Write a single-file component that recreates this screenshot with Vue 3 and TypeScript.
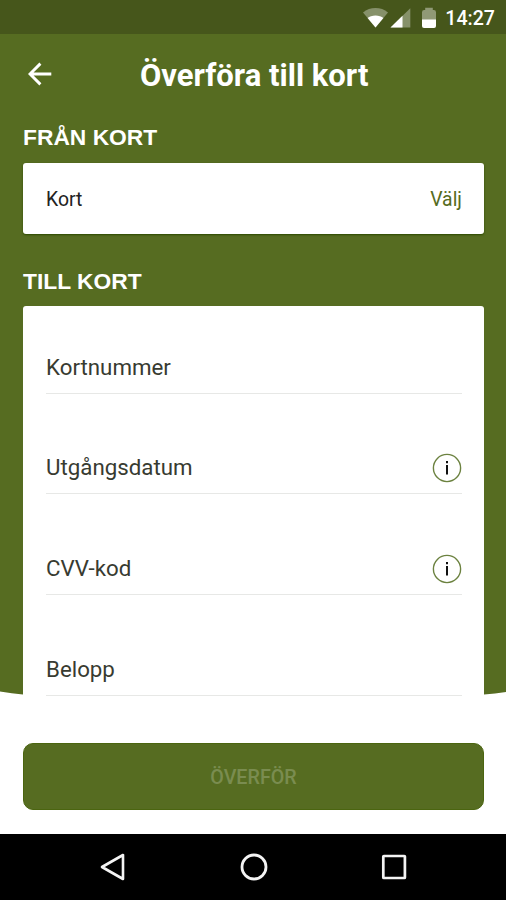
<script setup lang="ts">
interface Field {
  id: string
  label: string
  info: boolean
}

const fields: Field[] = [
  { id: 'number', label: 'Kortnummer', info: false },
  { id: 'expiry', label: 'Utgångsdatum', info: true },
  { id: 'cvv', label: 'CVV-kod', info: true },
  { id: 'amount', label: 'Belopp', info: false },
]
</script>

<template>
  <div class="screen">
    <div class="status">
      <svg class="status-icons" width="80" height="24" viewBox="0 0 80 24">
        <path d="M0 5.4C7 -.4 18 -.4 25 5.4L12.5 20.5Z" fill="#fff" fill-opacity=".35" />
        <path d="M4.6 11C8 7.6 17 7.6 20.4 11L12.5 20.5Z" fill="#fff" />
        <path d="M27.5 20.5L47.3 1.2V20.5Z" fill="#fff" fill-opacity=".35" />
        <path d="M27.5 20.5L39.5 8.8V20.5Z" fill="#fff" />
        <path d="M59 13V5.2Q59 3 61.2 3H62.2V.8H69.8V3H70.8Q73 3 73 5.2V13Z" fill="#fff" fill-opacity=".4" />
        <path d="M59 12.5H73V19Q73 21 71 21H61Q59 21 59 19Z" fill="#fff" />
      </svg>
      <span class="clock">14:27</span>
    </div>

    <main class="body">
      <header class="header">
        <svg class="back" width="24" height="24" viewBox="0 0 24 24">
          <path d="M23.3 12H2M12.4 1.6L2 12L12.4 22.4" fill="none" stroke="#fff" stroke-width="2.9" />
        </svg>
        <h1 class="title">Överföra till kort</h1>
      </header>

      <h2 class="section">FRÅN KORT</h2>
      <div class="card picker">
        <span class="picker-label">Kort</span>
        <span class="picker-action">Välj</span>
      </div>

      <h2 class="section second">TILL KORT</h2>
      <div class="card form">
        <div v-for="field in fields" :key="field.id" class="field">
          <span class="label">{{ field.label }}</span>
          <svg v-if="field.info" class="info" width="30" height="30" viewBox="0 0 30 30">
            <circle cx="15" cy="15" r="13.6" fill="none" stroke="#6c8240" stroke-width="1.4" />
            <path d="M15 12V21.5" stroke="#111" stroke-width="2" />
            <path d="M15 8V10.2" stroke="#111" stroke-width="2" />
          </svg>
        </div>
      </div>
    </main>

    <footer class="footer">
      <button class="submit" type="button" disabled>ÖVERFÖR</button>
    </footer>

    <nav class="nav">
      <svg width="28" height="30" viewBox="0 0 28 30">
        <path d="M3 15L24 3V27Z" fill="none" stroke="#f4f4f4" stroke-width="2.6" stroke-linejoin="round" />
      </svg>
      <svg width="30" height="30" viewBox="0 0 30 30">
        <circle cx="15" cy="15" r="12" fill="none" stroke="#f4f4f4" stroke-width="2.8" />
      </svg>
      <svg width="28" height="30" viewBox="0 0 28 30">
        <rect x="3.3" y="4" width="21.6" height="22" rx=".6" fill="none" stroke="#f4f4f4" stroke-width="2.7" />
      </svg>
    </nav>
  </div>
</template>

<style>
body {
  margin: 0;
  background: #fff;
}
</style>

<style scoped>
.screen {
  width: 506px;
  height: 900px;
  display: flex;
  flex-direction: column;
  overflow: hidden;
  background: #fff;
  font-family: Roboto, sans-serif;
}

.status {
  box-sizing: border-box;
  flex: none;
  height: 34px;
  padding: 0 11px 0 363px;
  display: flex;
  justify-content: space-between;
  background: #46561b;
  color: #fff;
}

.status-icons {
  margin-top: 6.5px;
}

.clock {
  font-size: 19.6px;
  font-weight: 500;
  line-height: 37px;
}

.body {
  box-sizing: border-box;
  flex: none;
  height: 676px;
  padding: 0 22px 0 23px;
  background: #566c21;
  clip-path: path('M0 0H506V658Q495 659.8 484 660.4V676H23V660.4Q12 659.5 0 657.5Z');
}

.header {
  height: 82px;
  display: flex;
  align-items: center;
}

.back {
  margin: -3px 0 0 5px;
}

.title {
  margin: 2px 0 0 88px;
  font-size: 31px;
  font-weight: 700;
  line-height: 40px;
  color: #fff;
  white-space: nowrap;
}

.section {
  margin: 8px 0 0;
  height: 38.5px;
  font-family: 'Liberation Sans', sans-serif;
  font-size: 22.8px;
  font-weight: 700;
  line-height: 26px;
  color: #fff;
}

.section.second {
  margin-top: 33px;
  line-height: 28px;
}

.card {
  box-sizing: border-box;
  background: #fff;
  border-radius: 3px;
}

.picker {
  height: 71.5px;
  padding: 2px 22px 0 23px;
  display: flex;
  justify-content: space-between;
  align-items: center;
  font-size: 19.4px;
  box-shadow: 0 1px 2px #2c4800;
}

.picker-label {
  color: #222;
}

.picker-action {
  color: #566c21;
}

.form {
  height: 410px;
  padding: 0 22px 0 23px;
  border-radius: 3px 3px 0 0;
}

.field {
  box-sizing: border-box;
  height: 100.8px;
  padding-top: 48px;
  display: flex;
  justify-content: space-between;
  align-items: center;
  border-bottom: 1.5px solid #e7e8e6;
}

.field:first-child {
  height: 88px;
  padding-top: 35px;
}

.label {
  font-size: 22.3px;
  color: #383b31;
}

.info {
  position: relative;
  top: .5px;
}

.footer {
  box-sizing: border-box;
  flex: none;
  height: 123.5px;
  padding: 33px 22px 0 23px;
}

.submit {
  display: block;
  width: 461px;
  height: 67px;
  padding: 2px 0 0;
  border: 1px solid #4b6510;
  border-radius: 10px;
  background: #566c21;
  font-family: Roboto, sans-serif;
  font-size: 19.7px;
  font-weight: 500;
  color: #7a8c50;
}

.nav {
  box-sizing: border-box;
  flex: none;
  height: 66.5px;
  padding: 0 98px 0 99px;
  display: flex;
  justify-content: space-between;
  align-items: center;
  background: #000;
}
</style>
